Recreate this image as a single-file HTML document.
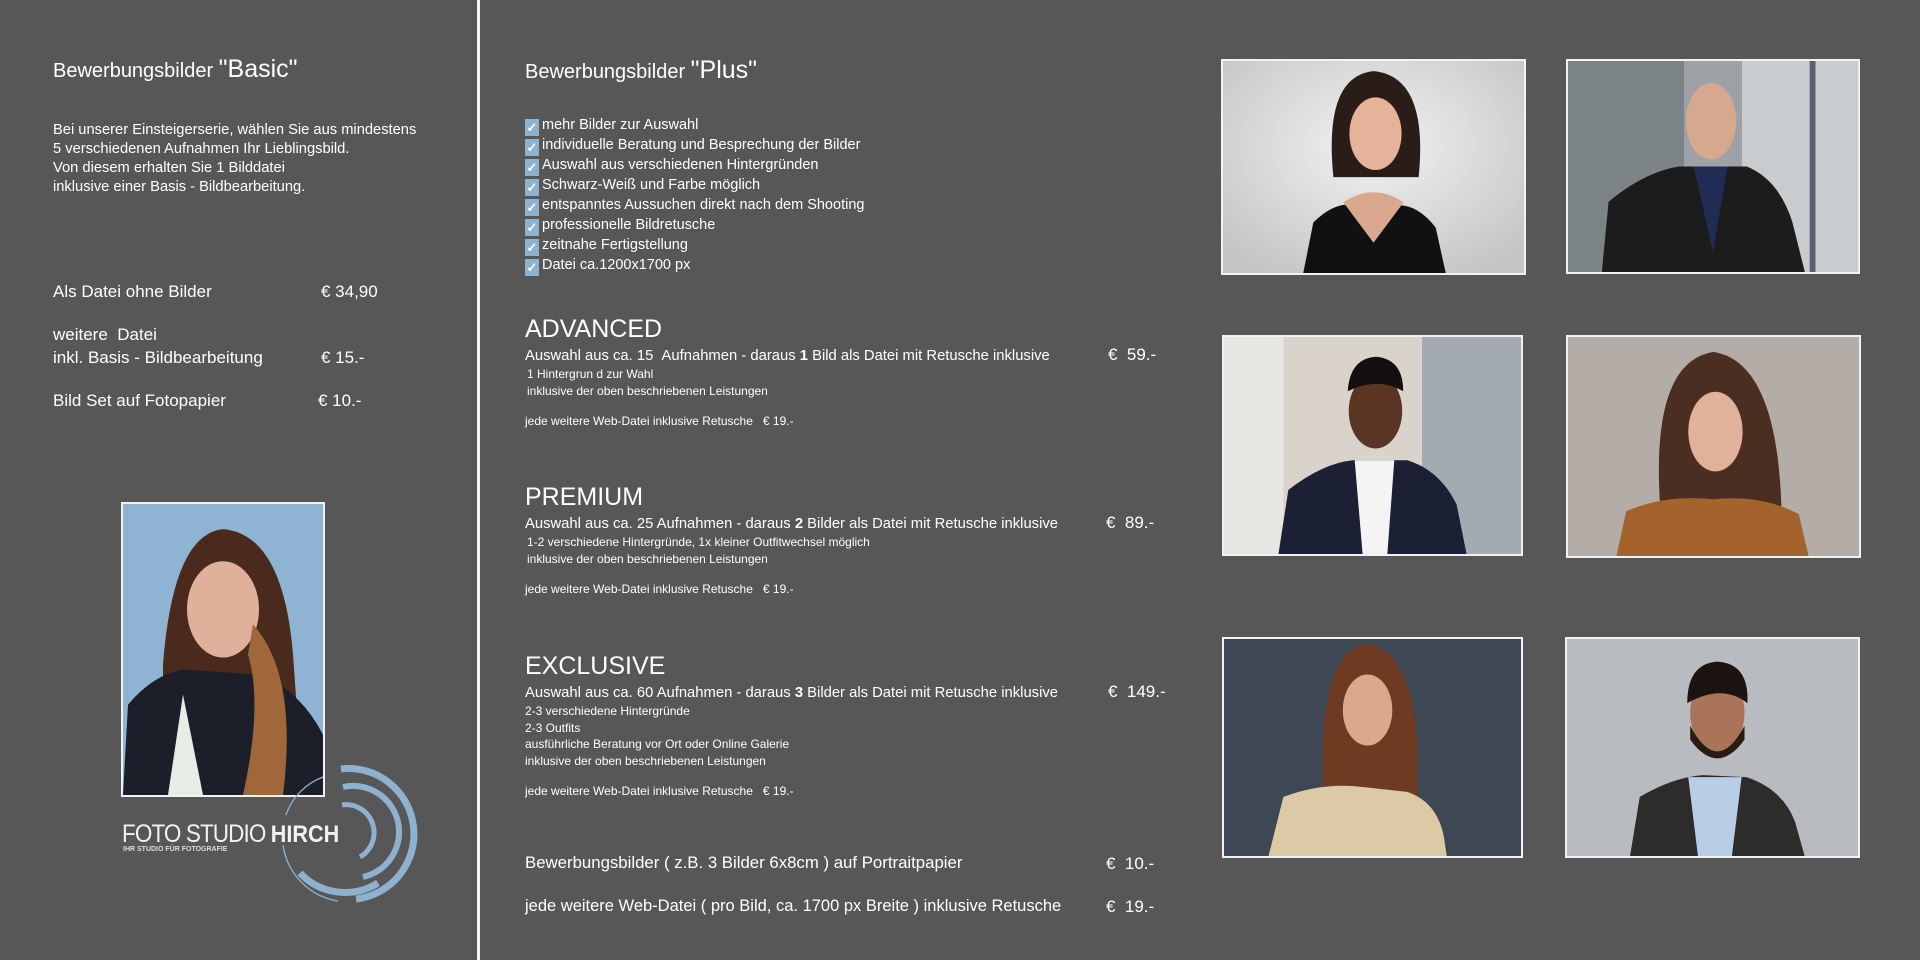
<!DOCTYPE html>
<html><head><meta charset="utf-8"><style>
*{margin:0;padding:0;box-sizing:border-box}
body{width:1920px;height:960px;background:#575757;position:relative;overflow:hidden;color:#fff;font-family:"Liberation Sans",sans-serif}
.t{position:absolute;white-space:nowrap;line-height:1}
.ph{position:absolute;border:2px solid #f2f2f2;overflow:hidden}
.ph svg{display:block;width:100%;height:100%}
.ck{display:inline-block;width:14px;height:17px;background:#8db2d0;color:#fff;font-size:13px;line-height:17px;text-align:center;margin-right:3px;vertical-align:-3px;font-weight:bold}
</style></head><body>
<div style="position:absolute;left:477px;top:0;width:3px;height:960px;background:#f4f4f4"></div>

<div class="t" style="left:53px;top:57px;font-size:20px">Bewerbungsbilder <span style="font-size:25px">"Basic"</span></div>
<div class="t" style="left:53px;top:121px;font-size:14.7px;line-height:19px">Bei unserer Einsteigerserie, wählen Sie aus mindestens<br>5 verschiedenen Aufnahmen Ihr Lieblingsbild.<br>Von diesem erhalten Sie 1 Bilddatei<br>inklusive einer Basis - Bildbearbeitung.</div>
<div class="t" style="left:53px;top:283px;font-size:17px">Als Datei ohne Bilder</div>
<div class="t" style="left:321px;top:283px;font-size:17px">€ 34,90</div>
<div class="t" style="left:53px;top:326px;font-size:17px">weitere &nbsp;Datei</div>
<div class="t" style="left:53px;top:349px;font-size:17px">inkl. Basis - Bildbearbeitung</div>
<div class="t" style="left:321px;top:349px;font-size:17px">€ 15.-</div>
<div class="t" style="left:53px;top:392px;font-size:17px">Bild Set auf Fotopapier</div>
<div class="t" style="left:318px;top:392px;font-size:17px">€ 10.-</div>

<div class="ph" style="left:121px;top:502px;width:204px;height:295px"><svg viewBox="0 0 200 290" preserveAspectRatio="none">
<rect width="200" height="290" fill="#8fb3d3"/>
<path d="M40 290 L40 160 Q50 30 100 25 Q160 30 170 150 L180 290Z" fill="#4a2a1c"/>
<path d="M0 290 L5 200 Q30 170 60 165 L140 170 Q180 190 200 230 L200 290Z" fill="#1c1f2a"/>
<path d="M60 190 L80 290 L45 290Z" fill="#e8ece6"/>
<ellipse cx="100" cy="105" rx="36" ry="48" fill="#e0b19a"/>
<path d="M130 120 Q175 170 160 290 L120 290 Q140 200 125 150Z" fill="#a0683a"/>
</svg></div>

<svg style="position:absolute;left:278px;top:765px" width="150" height="140" viewBox="0 0 150 140">
<g fill="none" stroke="#8fb1d0">
<path d="M63 4 A64 64 0 0 1 78 134" stroke-width="7"/>
<path d="M65 22 A46 46 0 0 1 85 112" stroke-width="6"/>
<path d="M64 40 A28 28 0 0 1 82 92" stroke-width="5"/>
<path d="M22 108 A62 62 0 0 0 100 118" stroke-width="7"/>
<path d="M8 50 A62 62 0 0 1 45 12" stroke-width="1.3"/>
<path d="M5 80 A66 66 0 0 0 60 136" stroke-width="1.3"/>
</g></svg>
<div class="t" style="left:122px;top:822px;font-size:25px;letter-spacing:-1px;color:#f2f2f2;transform:scaleX(0.9);transform-origin:left">FOTO STUDIO <b style="font-size:24px;letter-spacing:0">HIRCH</b></div>
<div class="t" style="left:123px;top:846px;font-size:7px;font-weight:bold;color:#ddd">IHR STUDIO FÜR FOTOGRAFIE</div>

<div class="t" style="left:525px;top:58px;font-size:20px">Bewerbungsbilder <span style="font-size:25px">"Plus"</span></div>
<div class="t" style="left:525px;top:116px;font-size:14.5px;line-height:19px">
<span class="ck">✓</span>mehr Bilder zur Auswahl<br><span class="ck">✓</span>individuelle Beratung und Besprechung der Bilder<br><span class="ck">✓</span>Auswahl aus verschiedenen Hintergründen<br><span class="ck">✓</span>Schwarz-Weiß und Farbe möglich<br><span class="ck">✓</span>entspanntes Aussuchen direkt nach dem Shooting<br><span class="ck">✓</span>professionelle Bildretusche<br><span class="ck">✓</span>zeitnahe Fertigstellung<br><span class="ck">✓</span>Datei ca.1200x1700 px</div>

<div class="t" style="left:525px;top:317px;font-size:25px">ADVANCED</div>
<div class="t" style="left:525px;top:349px;font-size:14.8px">Auswahl aus ca. 15 &nbsp;Aufnahmen - daraus <b>1</b> Bild als Datei mit Retusche inklusive</div>
<div class="t" style="left:1108px;top:346px;font-size:17px">€ &nbsp;59.-</div>
<div class="t" style="left:527px;top:366px;font-size:12px;line-height:16.5px">1 Hintergrun d zur Wahl<br>inklusive der oben beschriebenen Leistungen</div>
<div class="t" style="left:525px;top:415px;font-size:12px">jede weitere Web-Datei inklusive Retusche &nbsp; € 19.-</div>

<div class="t" style="left:525px;top:485px;font-size:25px">PREMIUM</div>
<div class="t" style="left:525px;top:517px;font-size:14.8px">Auswahl aus ca. 25 Aufnahmen - daraus <b>2</b> Bilder als Datei mit Retusche inklusive</div>
<div class="t" style="left:1106px;top:514px;font-size:17px">€ &nbsp;89.-</div>
<div class="t" style="left:527px;top:534px;font-size:12px;line-height:16.5px">1-2 verschiedene Hintergründe, 1x kleiner Outfitwechsel möglich<br>inklusive der oben beschriebenen Leistungen</div>
<div class="t" style="left:525px;top:583px;font-size:12px">jede weitere Web-Datei inklusive Retusche &nbsp; € 19.-</div>

<div class="t" style="left:525px;top:654px;font-size:25px">EXCLUSIVE</div>
<div class="t" style="left:525px;top:686px;font-size:14.8px">Auswahl aus ca. 60 Aufnahmen - daraus <b>3</b> Bilder als Datei mit Retusche inklusive</div>
<div class="t" style="left:1108px;top:683px;font-size:17px">€ &nbsp;149.-</div>
<div class="t" style="left:525px;top:703px;font-size:12px;line-height:16.5px">2-3 verschiedene Hintergründe<br>2-3 Outfits<br>ausführliche Beratung vor Ort oder Online Galerie<br>inklusive der oben beschriebenen Leistungen</div>
<div class="t" style="left:525px;top:785px;font-size:12px">jede weitere Web-Datei inklusive Retusche &nbsp; € 19.-</div>

<div class="t" style="left:525px;top:855px;font-size:16.8px">Bewerbungsbilder ( z.B. 3 Bilder 6x8cm ) auf Portraitpapier</div>
<div class="t" style="left:1106px;top:855px;font-size:17px">€ &nbsp;10.-</div>
<div class="t" style="left:525px;top:898px;font-size:16.5px">jede weitere Web-Datei ( pro Bild, ca. 1700 px Breite ) inklusive Retusche</div>
<div class="t" style="left:1106px;top:898px;font-size:17px">€ &nbsp;19.-</div>

<!-- photos -->
<div class="ph" style="left:1221px;top:59px;width:305px;height:216px"><svg viewBox="0 0 300 210" preserveAspectRatio="none">
<defs><radialGradient id="g1" cx="0.5" cy="0.4" r="0.7"><stop offset="0" stop-color="#f2f2f2"/><stop offset="1" stop-color="#c4c4c4"/></radialGradient></defs>
<rect width="300" height="210" fill="url(#g1)"/>
<path d="M110 115 Q100 15 150 10 Q205 15 195 115Z" fill="#2a1d18"/>
<path d="M80 210 L90 160 Q120 130 150 150 Q185 130 212 165 L222 210Z" fill="#111"/>
<path d="M120 140 L150 180 L180 140 Q150 120 120 140Z" fill="#d9a88e"/>
<ellipse cx="152" cy="72" rx="26" ry="36" fill="#e4b39a"/>
</svg></div>
<div class="ph" style="left:1566px;top:59px;width:294px;height:215px"><svg viewBox="0 0 300 210" preserveAspectRatio="none">
<rect width="300" height="210" fill="#9ea2a6"/><rect x="0" width="120" height="210" fill="#7d8488"/><rect x="180" width="120" height="210" fill="#c9cccf"/><rect x="250" width="6" height="210" fill="#5a6270"/>
<path d="M35 210 L42 140 Q80 110 115 105 L185 105 Q218 118 232 160 L245 210Z" fill="#1c1c1c"/>
<path d="M130 105 L150 190 L165 105Z" fill="#1f2d55"/>
<ellipse cx="148" cy="60" rx="26" ry="38" fill="#d6a98e"/>
</svg></div>

<div class="ph" style="left:1222px;top:335px;width:301px;height:221px"><svg viewBox="0 0 300 220" preserveAspectRatio="none">
<rect width="300" height="220" fill="#d9d3cb"/><rect x="200" width="100" height="220" fill="#a4aab2"/><rect x="0" width="60" height="220" fill="#e8e6e2"/>
<path d="M55 220 L65 155 Q100 128 130 125 L185 125 Q218 135 235 170 L245 220Z" fill="#1b2035"/>
<path d="M132 125 L140 220 L165 220 L172 125Z" fill="#f4f4f4"/>
<ellipse cx="153" cy="75" rx="27" ry="38" fill="#5a3524"/>
<path d="M125 55 Q127 22 153 20 Q181 22 181 55 Q155 40 125 55Z" fill="#151010"/>
</svg></div>
<div class="ph" style="left:1566px;top:335px;width:295px;height:223px"><svg viewBox="0 0 300 220" preserveAspectRatio="none">
<rect width="300" height="220" fill="#b4ada7"/>
<path d="M95 170 Q85 25 150 15 Q215 25 220 170Z" fill="#4a2e22"/>
<path d="M50 220 L60 175 Q100 158 150 163 Q200 158 238 178 L248 220Z" fill="#a4622c"/>
<ellipse cx="152" cy="95" rx="28" ry="40" fill="#e0b29a"/>
</svg></div>

<div class="ph" style="left:1222px;top:637px;width:301px;height:221px"><svg viewBox="0 0 300 220" preserveAspectRatio="none">
<rect width="300" height="220" fill="#3e4854"/>
<path d="M100 150 Q95 10 145 5 Q200 15 195 150 L210 220 L175 220Z" fill="#6e3a22"/>
<path d="M45 220 L60 160 Q100 145 140 150 L185 155 Q215 165 222 200 L225 220Z" fill="#dcc9a5"/>
<ellipse cx="145" cy="72" rx="25" ry="36" fill="#dba88c"/>
</svg></div>
<div class="ph" style="left:1565px;top:637px;width:295px;height:221px"><svg viewBox="0 0 300 220" preserveAspectRatio="none">
<rect width="300" height="220" fill="#b8bcc0"/>
<path d="M65 220 L75 160 Q110 140 140 138 L185 140 Q222 152 235 185 L245 220Z" fill="#2e2c2a"/>
<path d="M125 140 L135 220 L170 220 L180 140Z" fill="#b8cde6"/>
<ellipse cx="155" cy="75" rx="28" ry="40" fill="#a97458"/>
<path d="M127 88 Q155 140 183 88 L183 102 Q155 140 127 102Z" fill="#2a1a14"/>
<path d="M124 65 Q124 25 155 23 Q188 25 186 65 Q160 45 124 65Z" fill="#1c1410"/>
</svg></div>
</body></html>
